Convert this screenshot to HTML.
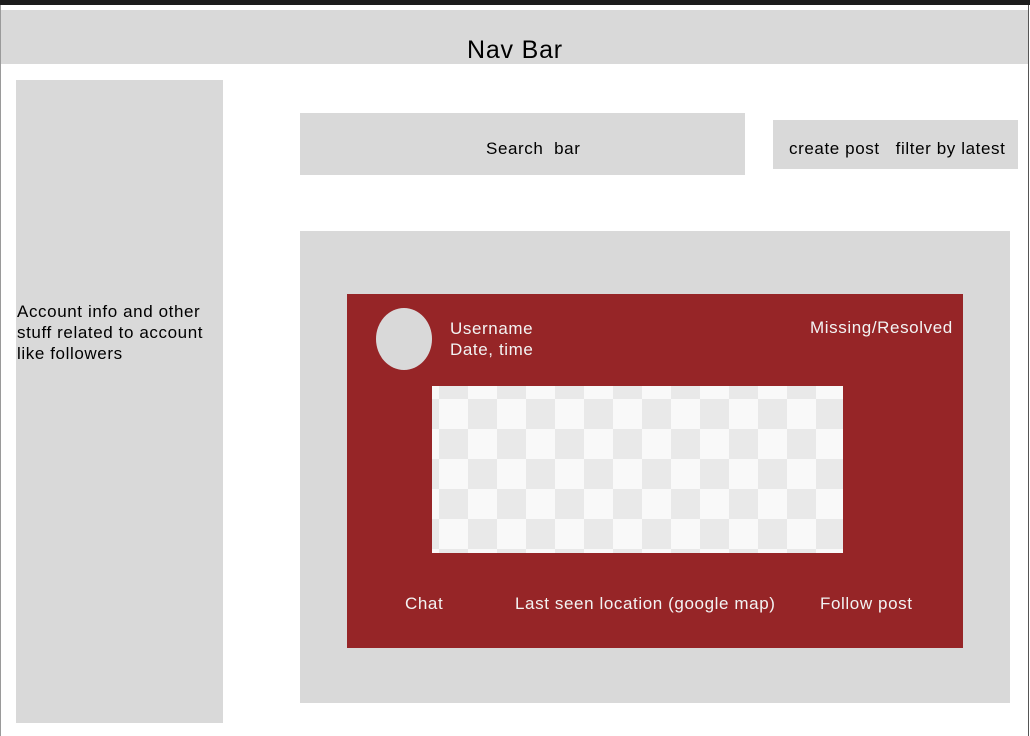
<!DOCTYPE html>
<html><head><meta charset="utf-8"><style>
*{margin:0;padding:0;box-sizing:border-box}
body{width:1030px;height:736px;background:#fff;position:relative;overflow:hidden;font-family:"Liberation Sans",Arial,sans-serif;color:#000}
div{position:absolute}
.g{background:#d9d9d9}
.t{white-space:nowrap;font-size:17px;line-height:21px;letter-spacing:0.6px}
.w{color:#f3f3f3}
</style></head><body>
<div style="left:0;top:0;width:1030px;height:5px;background:#1c1c1c"></div>
<div style="left:0;top:5px;width:1px;height:731px;background:#9a9a9a"></div>
<div style="left:1028px;top:5px;width:1px;height:731px;background:#555"></div>
<div class="g" style="left:1px;top:10px;width:1027px;height:54px"></div>
<div class="t" style="left:467px;top:36px;font-size:25px;line-height:28px;letter-spacing:0.8px">Nav Bar</div>
<div class="g" style="left:16px;top:80px;width:207px;height:643px"></div>
<div class="t" style="left:17px;top:301px;line-height:21px">Account info and other<br>stuff related to account<br>like followers</div>
<div class="g" style="left:300px;top:113px;width:445px;height:62px"></div>
<div class="t" style="left:486px;top:138px">Search&nbsp; bar</div>
<div class="g" style="left:773px;top:120px;width:245px;height:49px"></div>
<div class="t" style="left:789px;top:138px">create post&nbsp;&nbsp; filter by latest</div>
<div class="g" style="left:300px;top:231px;width:710px;height:472px"></div>
<div style="left:347px;top:294px;width:616px;height:354px;background:#962527"></div>
<div style="left:376px;top:308px;width:56px;height:62px;border-radius:50%;background:#d9d9d9"></div>
<div class="t w" style="left:450px;top:318px">Username<br>Date, time</div>
<div class="t w" style="left:810px;top:317px">Missing/Resolved</div>
<div style="left:432px;top:386px;width:411px;height:167px;background:repeating-conic-gradient(#e9e9e9 0 25%,#f9f9f9 0 50%);background-size:58px 60px;background-position:7px 13px"></div>
<div class="t w" style="left:405px;top:593px">Chat</div>
<div class="t w" style="left:515px;top:593px">Last seen location (google map)</div>
<div class="t w" style="left:820px;top:593px">Follow post</div>
</body></html>
